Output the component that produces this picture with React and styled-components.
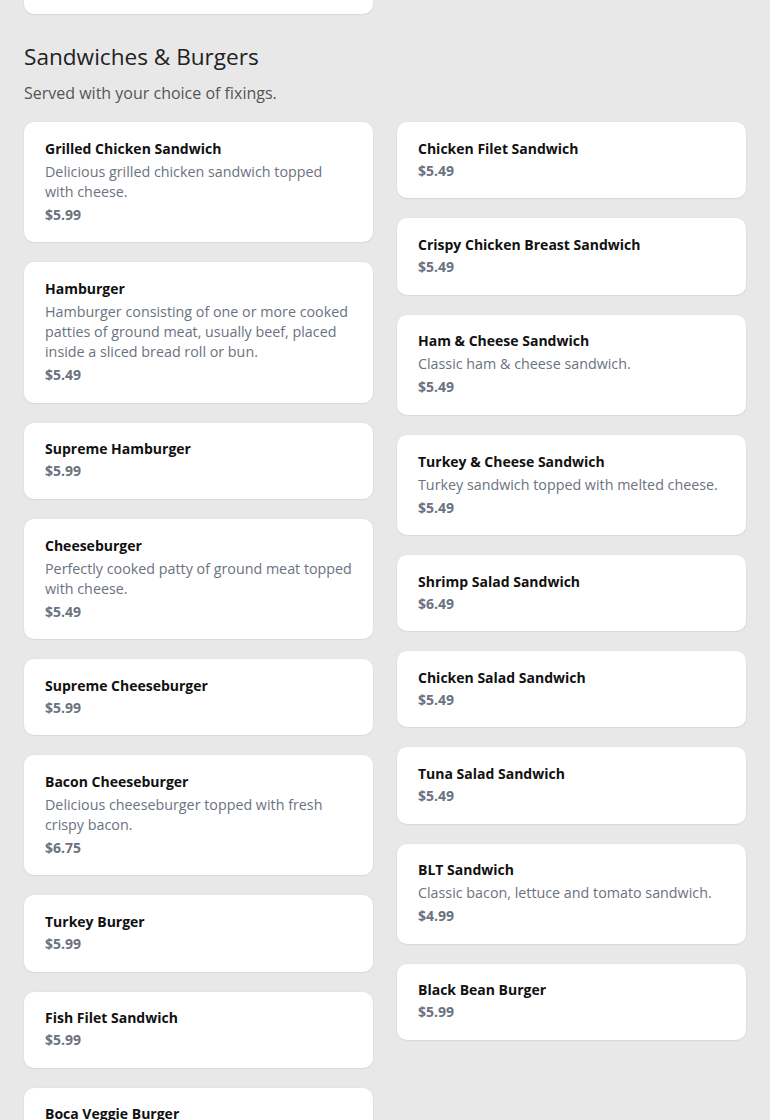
import React from "react";
import styled, { createGlobalStyle } from "styled-components";

const Global = createGlobalStyle`
  html, body { margin: 0; padding: 0; background: #e8e8e8; }
  body { font-family: "Open Sans", "Liberation Sans", sans-serif; }
  * { box-sizing: border-box; }
`;

const Page = styled.div`
  padding: 0 24px 24px;
  margin-top: -20px;
`;

const Columns = styled.div`
  display: grid;
  grid-template-columns: 1fr 1fr;
  gap: 24px;
  align-items: start;
`;

const Column = styled.div`
  display: flex;
  flex-direction: column;
  gap: 20px;
`;

const Card = styled.div`
  background: #ffffff;
  border-radius: 10px;
  box-shadow: 0 1px 2px rgba(0, 0, 0, 0.06), 0 0 0 1px rgba(0, 0, 0, 0.015);
  padding: 16.8px 21px 17.4px 21px;
  display: flex;
  flex-direction: column;
`;

const PrevCard = styled(Card)`
  height: 34px;
`;

const Section = styled.section`
  margin-top: 27px;
`;

const Heading = styled.h2`
  margin: 0;
  font-size: 22.6px;
  font-weight: 400;
  line-height: 32px;
  color: #222;
`;

const Sub = styled.p`
  margin: 8px 0 17px;
  font-size: 16px;
  line-height: 24px;
  color: #555;
`;

const Title = styled.div`
  font-size: 14px;
  font-weight: 700;
  line-height: 20px;
  color: #111;
`;

const Desc = styled.div`
  margin: 3px 0 1px;
  font-size: 14.3px;
  line-height: 20px;
  color: #6b7280;
`;

const Price = styled.div`
  margin-top: 2px;
  font-size: 14px;
  font-weight: 700;
  line-height: 20px;
  color: #6b7280;
`;

const left = [
  ["Grilled Chicken Sandwich", "Delicious grilled chicken sandwich topped with cheese.", "$5.99"],
  ["Hamburger", "Hamburger consisting of one or more cooked patties of ground meat, usually beef, placed inside a sliced bread roll or bun.", "$5.49"],
  ["Supreme Hamburger", null, "$5.99"],
  ["Cheeseburger", "Perfectly cooked patty of ground meat topped with cheese.", "$5.49"],
  ["Supreme Cheeseburger", null, "$5.99"],
  ["Bacon Cheeseburger", "Delicious cheeseburger topped with fresh crispy bacon.", "$6.75"],
  ["Turkey Burger", null, "$5.99"],
  ["Fish Filet Sandwich", null, "$5.99"],
  ["Boca Veggie Burger", null, "$5.99"],
];

const right = [
  ["Chicken Filet Sandwich", null, "$5.49"],
  ["Crispy Chicken Breast Sandwich", null, "$5.49"],
  ["Ham & Cheese Sandwich", "Classic ham & cheese sandwich.", "$5.49"],
  ["Turkey & Cheese Sandwich", "Turkey sandwich topped with melted cheese.", "$5.49"],
  ["Shrimp Salad Sandwich", null, "$6.49"],
  ["Chicken Salad Sandwich", null, "$5.49"],
  ["Tuna Salad Sandwich", null, "$5.49"],
  ["BLT Sandwich", "Classic bacon, lettuce and tomato sandwich.", "$4.99"],
  ["Black Bean Burger", null, "$5.99"],
];

function Item({ title, desc, price }) {
  return (
    <Card>
      <Title>{title}</Title>
      {desc && <Desc>{desc}</Desc>}
      <Price>{price}</Price>
    </Card>
  );
}

export default function App() {
  return (
    <Page>
      <Global />
      <Columns>
        <Column>
          <PrevCard />
        </Column>
        <Column />
      </Columns>
      <Section>
        <Heading>Sandwiches &amp; Burgers</Heading>
        <Sub>Served with your choice of fixings.</Sub>
        <Columns>
          <Column>
            {left.map(([t, d, p]) => (
              <Item key={t} title={t} desc={d} price={p} />
            ))}
          </Column>
          <Column>
            {right.map(([t, d, p]) => (
              <Item key={t} title={t} desc={d} price={p} />
            ))}
          </Column>
        </Columns>
      </Section>
    </Page>
  );
}
